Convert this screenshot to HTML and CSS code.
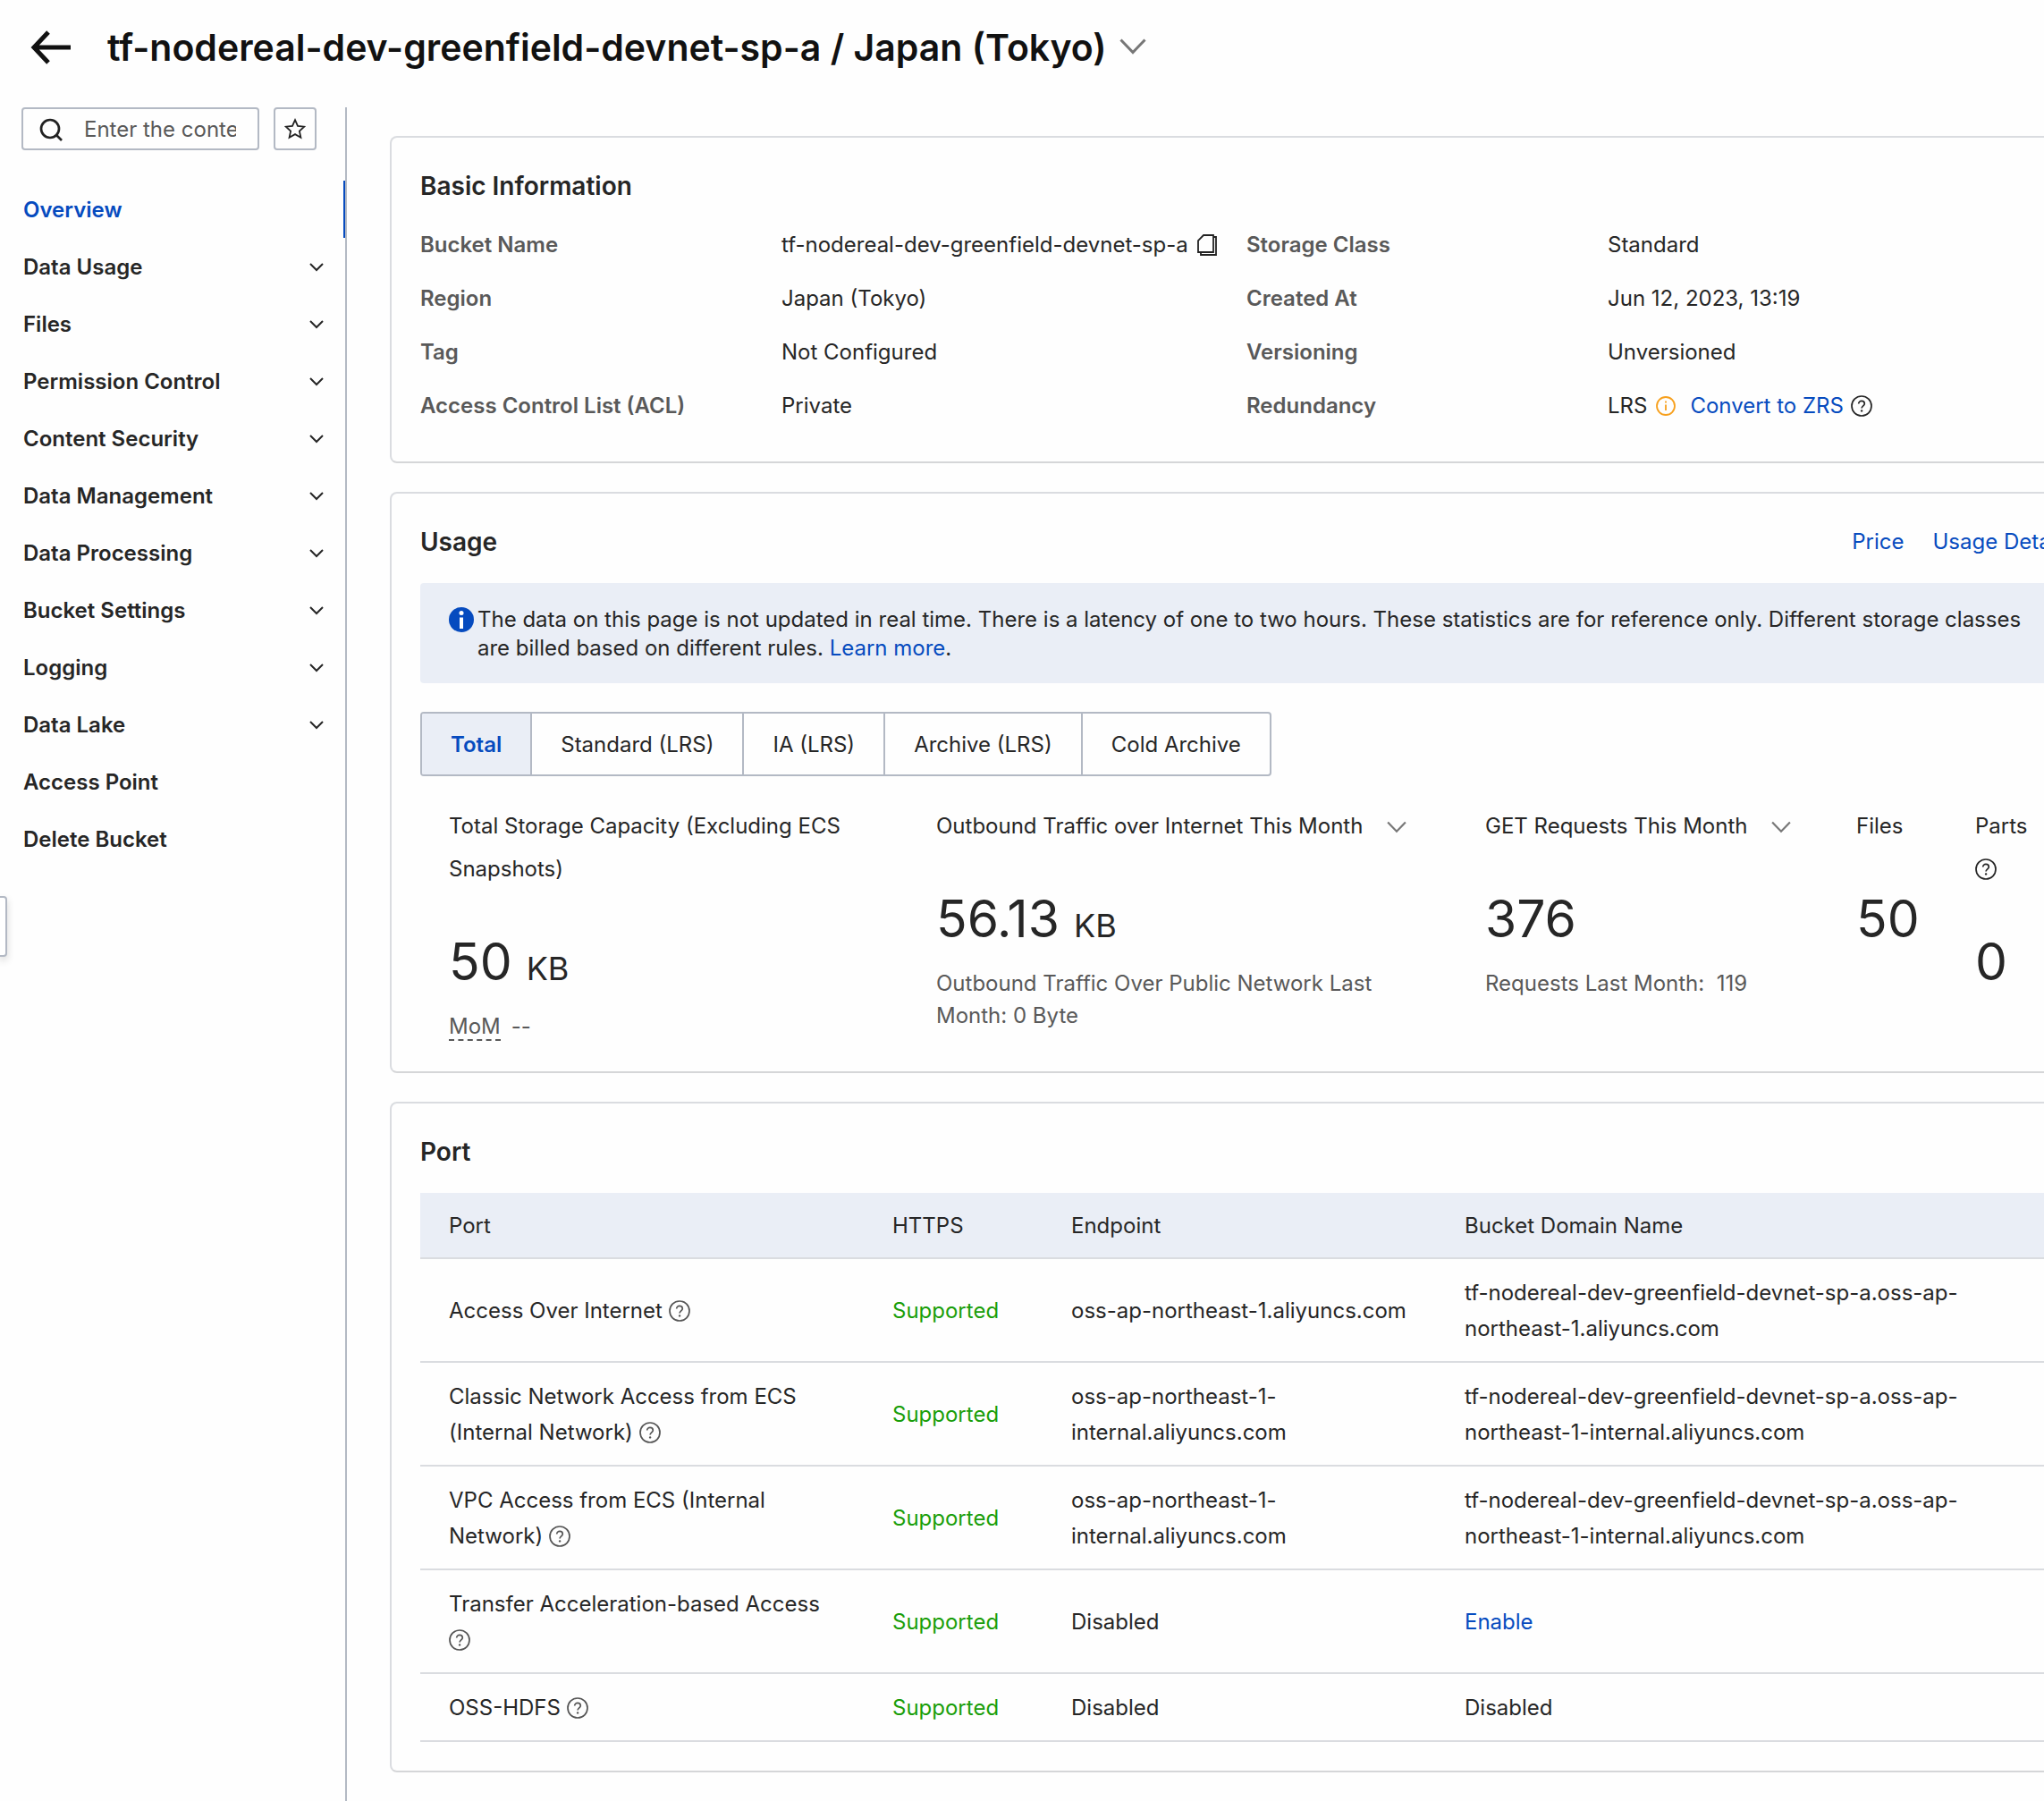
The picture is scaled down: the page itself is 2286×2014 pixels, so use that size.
FILE: index.html
```html
<!DOCTYPE html>
<html lang="en">
<head>
<meta charset="utf-8">
<title>tf-nodereal-dev-greenfield-devnet-sp-a</title>
<link rel="stylesheet" href="styles.css">
</head>
<body>
<svg class="defs" aria-hidden="true">
  <symbol id="help" viewBox="0 0 24 24"><circle cx="12" cy="12" r="11" fill="none" stroke="currentColor" stroke-width="1.7"/><path d="M8.7 9.6C8.7 7.6 10.1 6.4 12 6.4s3.3 1.2 3.3 3c0 2.3-3.2 2.6-3.2 5.1" fill="none" stroke="currentColor" stroke-width="1.7"/><circle cx="12.1" cy="17.4" r="1.2" fill="currentColor"/></symbol>
  <symbol id="chev" viewBox="0 0 16 10"><path d="M1 1l7 7 7-7" fill="none" stroke="currentColor" stroke-width="2"/></symbol>
  <symbol id="chev-wide" viewBox="0 0 30 18"><path d="M1.5 1.5L15 15.5 28.5 1.5" fill="none" stroke="currentColor" stroke-width="3"/></symbol>
</svg>
<div class="page">
  <header class="header">
    <button class="plain" aria-label="Back"><svg width="46" height="38" viewBox="0 0 46 38" fill="none" stroke="#111" stroke-width="5"><path d="M20 2L4 19l16 17M4 19h41"/></svg></button>
    <h1 class="title">tf-nodereal-dev-greenfield-devnet-sp-a / Japan (Tokyo)</h1>
    <button class="plain title-toggle" aria-label="Switch bucket"><svg width="30" height="18"><use href="#chev-wide"/></svg></button>
  </header>
  <div class="body">
    <aside class="sidebar">
      <div class="tools">
        <label class="search">
          <svg width="26" height="26" viewBox="0 0 26 26" fill="none" stroke="#222" stroke-width="2.7"><circle cx="12" cy="12" r="10"/><path d="M19 19l6 6"/></svg>
          <input type="text" placeholder="Enter the content" aria-label="Search menu">
        </label>
        <button class="star" aria-label="Favorites"><svg width="24" height="24" viewBox="0 0 24 24" fill="none" stroke="#222" stroke-width="1.8"><path d="M12 2.2l3 6.7 7.3.8-5.4 4.9 1.5 7.2-6.4-3.7-6.4 3.7 1.5-7.2L1.7 9.7l7.300-.8z"/></svg></button>
      </div>
      <nav class="menu">
        <a class="item active" href="#">Overview</a>
        <a class="item" href="#">Data Usage<svg width="16" height="10"><use href="#chev"/></svg></a>
        <a class="item" href="#">Files<svg width="16" height="10"><use href="#chev"/></svg></a>
        <a class="item" href="#">Permission Control<svg width="16" height="10"><use href="#chev"/></svg></a>
        <a class="item" href="#">Content Security<svg width="16" height="10"><use href="#chev"/></svg></a>
        <a class="item" href="#">Data Management<svg width="16" height="10"><use href="#chev"/></svg></a>
        <a class="item" href="#">Data Processing<svg width="16" height="10"><use href="#chev"/></svg></a>
        <a class="item" href="#">Bucket Settings<svg width="16" height="10"><use href="#chev"/></svg></a>
        <a class="item" href="#">Logging<svg width="16" height="10"><use href="#chev"/></svg></a>
        <a class="item" href="#">Data Lake<svg width="16" height="10"><use href="#chev"/></svg></a>
        <a class="item" href="#">Access Point</a>
        <a class="item" href="#">Delete Bucket</a>
      </nav>
    </aside>
    <main class="main">
      <section class="card">
        <div class="card-head"><h2>Basic Information</h2></div>
        <dl class="info">
          <dt>Bucket Name</dt>
          <dd>tf-nodereal-dev-greenfield-devnet-sp-a<button class="plain copy" aria-label="Copy"><svg width="22" height="24" viewBox="0 0 22 24" fill="none" stroke="#222" stroke-width="1.8"><path d="M7 1h11v19H1V7z"/><path d="M18 3h3v20H4v-3"/></svg></button></dd>
          <dt>Storage Class</dt><dd>Standard</dd>
          <dt>Region</dt><dd>Japan (Tokyo)</dd>
          <dt>Created At</dt><dd>Jun 12, 2023, 13:19</dd>
          <dt>Tag</dt><dd>Not Configured</dd>
          <dt>Versioning</dt><dd>Unversioned</dd>
          <dt>Access Control List (ACL)</dt><dd>Private</dd>
          <dt>Redundancy</dt>
          <dd>LRS<svg class="warn" width="22" height="22" viewBox="0 0 22 22" fill="none" stroke="#f7a01d" stroke-width="1.8"><circle cx="11" cy="11" r="10"/><path d="M11 9.5V16M11 5.5v2"/></svg><a href="#">Convert to ZRS</a><svg class="help" width="24" height="24"><use href="#help"/></svg></dd>
        </dl>
      </section>

      <section class="card">
        <div class="card-head"><h2>Usage</h2><div class="links"><a href="#">Price</a><a href="#">Usage Details</a></div></div>
        <div class="alert">
          <svg width="28" height="28" viewBox="0 0 28 28"><circle cx="14" cy="14" r="14" fill="#064bbf"/><circle cx="14" cy="6.5" r="2.5" fill="#fff"/><path d="M14 11.5V24" stroke="#fff" stroke-width="4"/></svg>
          <p>The data on this page is not updated in real time. There is a latency of one to two hours. These statistics are for reference only. Different storage classes are billed based on different rules. <a href="#">Learn more</a>.</p>
        </div>
        <div class="tabs">
          <button class="tab on">Total</button><button class="tab">Standard (LRS)</button><button class="tab">IA (LRS)</button><button class="tab">Archive (LRS)</button><button class="tab">Cold Archive</button>
        </div>
        <div class="stats">
          <div class="stat"><div class="name">Total Storage Capacity (Excluding ECS Snapshots)</div><div class="num">50 <span class="unit">KB</span></div><div class="sub"><span class="mom">MoM</span>--</div></div>
          <div class="stat"><div class="name">Outbound Traffic over Internet This Month<svg class="more" width="22" height="14"><use href="#chev-wide"/></svg></div><div class="num">56.13 <span class="unit">KB</span></div><div class="sub">Outbound Traffic Over Public Network Last Month: 0 Byte</div></div>
          <div class="stat"><div class="name">GET Requests This Month<svg class="more" width="22" height="14"><use href="#chev-wide"/></svg></div><div class="num">376</div><div class="sub">Requests Last Month:&nbsp; 119</div></div>
          <div class="stat"><div class="name">Files</div><div class="num">50</div></div>
          <div class="stat"><div class="name">Parts <svg class="help" width="24" height="24"><use href="#help"/></svg></div><div class="num">0</div></div>
        </div>
      </section>

      <section class="card">
        <div class="card-head"><h2>Port</h2></div>
        <table class="ports">
          <colgroup><col class="c-port"><col class="c-https"><col class="c-end"><col></colgroup>
          <thead><tr><th>Port</th><th>HTTPS</th><th>Endpoint</th><th>Bucket Domain Name</th></tr></thead>
          <tbody>
            <tr><td>Access Over Internet <svg class="help" width="24" height="24"><use href="#help"/></svg></td><td class="ok">Supported</td><td>oss-ap-northeast-1.aliyuncs.com</td><td>tf-nodereal-dev-greenfield-devnet-sp-a.oss-ap-northeast-1.aliyuncs.com</td></tr>
            <tr><td>Classic Network Access from ECS (Internal Network) <svg class="help" width="24" height="24"><use href="#help"/></svg></td><td class="ok">Supported</td><td>oss-ap-northeast-1-internal.aliyuncs.com</td><td>tf-nodereal-dev-greenfield-devnet-sp-a.oss-ap-northeast-1-internal.aliyuncs.com</td></tr>
            <tr><td>VPC Access from ECS (Internal Network) <svg class="help" width="24" height="24"><use href="#help"/></svg></td><td class="ok">Supported</td><td>oss-ap-northeast-1-internal.aliyuncs.com</td><td>tf-nodereal-dev-greenfield-devnet-sp-a.oss-ap-northeast-1-internal.aliyuncs.com</td></tr>
            <tr><td>Transfer Acceleration-based Access <svg class="help" width="24" height="24"><use href="#help"/></svg></td><td class="ok">Supported</td><td>Disabled</td><td><a href="#">Enable</a></td></tr>
            <tr><td>OSS-HDFS <svg class="help" width="24" height="24"><use href="#help"/></svg></td><td class="ok">Supported</td><td>Disabled</td><td>Disabled</td></tr>
          </tbody>
        </table>
      </section>
    </main>
  </div>
  <button class="drawer" aria-label="Open navigation"></button>
</div>
</body>
</html>
```
FILE: styles.css
```css
* { box-sizing: border-box; }
body {
  margin: 0;
  background: #fefefe;
  color: #262626;
  font: 24px/32px Inter, "Liberation Sans", sans-serif;
}
h1, h2, p, dl, dd { margin: 0; }
a { color: #064bbf; text-decoration: none; }
button { font: inherit; color: inherit; cursor: pointer; }
svg { flex: none; }
.defs { display: none; }
.plain { display: flex; padding: 0; border: 0; background: none; }

.page {
  position: relative;
  display: flex;
  flex-direction: column;
  min-height: 100vh;
  overflow: hidden;
}
.header {
  display: flex;
  align-items: center;
  height: 106px;
  margin-bottom: 14px;
  padding-left: 34px;
}
.title { margin-left: 40px; font-size: 41px; line-height: 56px; font-weight: 600; color: #111; white-space: nowrap; }
.title-toggle { margin-left: 14px; padding-bottom: 2px; color: #777; }
.body { display: flex; flex: 1; }

.sidebar { flex: none; width: 388px; border-right: 2px solid #b3b9c4; }
.tools { display: flex; gap: 16px; padding-left: 24px; margin-bottom: 34px; }
.search {
  display: flex;
  align-items: center;
  gap: 24px;
  width: 266px;
  height: 48px;
  padding: 2px 24px 0 18px;
  border: 2px solid #b3b9c4;
  border-radius: 4px;
}
.search input {
  flex: 1;
  min-width: 0;
  padding: 0;
  border: 0;
  outline: 0;
  background: none;
  font: inherit;
}
.search input::placeholder { color: #595959; }
.star {
  display: flex;
  align-items: center;
  justify-content: center;
  width: 48px;
  height: 48px;
  padding: 0;
  border: 2px solid #b3b9c4;
  border-radius: 4px;
  background: none;
}
.item {
  display: flex;
  align-items: center;
  justify-content: space-between;
  height: 64px;
  padding: 2px 22px 0 26px;
  border-right: 2px solid transparent;
  color: #262626;
  font-weight: 600;
}
.item.active { color: #064bbf; border-right-color: #064bbf; }

/* The content column runs past the right edge of the window. */
.main {
  display: flex;
  flex-direction: column;
  gap: 32px;
  flex: 1;
  min-width: 0;
  margin-right: -66px;
  padding: 32px 0 32px 48px;
}
.card {
  padding: 32px;
  border: 2px solid #dadce0;
  border-bottom-color: #d5d6d8;
  border-radius: 8px;
}
.card-head { display: flex; justify-content: space-between; align-items: center; height: 44px; margin-bottom: 24px; }
.card-head h2 { font-size: 28px; line-height: 44px; font-weight: 600; }
.links { display: flex; gap: 32px; }

.info {
  display: grid;
  grid-template-columns: 404fr 520fr 404fr 520fr;
  row-gap: 28px;
  padding: 4px 0 14px;
}
.info dt { color: #595959; font-weight: 600; }
.info dd { display: flex; align-items: center; white-space: nowrap; }
.copy { margin-left: 10px; }
.warn { margin: 0 16px 0 10px; }
.info .help { margin-left: 8px; }

.alert { display: flex; gap: 4px; align-items: flex-start; padding: 25px 32px 23px; border-radius: 4px; background: #eaeef6; }
.alert svg { margin-top: 2px; }
.alert + .tabs { margin-top: 32px; }
.tabs { display: flex; width: fit-content; height: 72px; border: 2px solid #b3b9c4; border-radius: 4px; overflow: hidden; }
.tab { padding: 2px 32px 0; border: 0; background: none; }
.tab + .tab { border-left: 2px solid #b3b9c4; }
.tab.on { background: #eaeef6; color: #064bbf; font-weight: 600; }

.stats { display: grid; grid-template-columns: 545fr 614fr 415fr 133fr 141fr; margin-top: 32px; }
.stat { min-width: 0; padding: 0 32px; }
.name { line-height: 48px; }
.more { margin-left: 27px; color: #777; }
.num { margin-top: 48px; font-size: 57px; line-height: 64px; white-space: nowrap; }
.unit { font-size: 36px; line-height: 36px; }
.sub { margin-top: 22px; line-height: 36px; color: #595959; }
.mom { margin-right: 12px; border-bottom: 2px dashed #595959; }

.ports { width: 100%; table-layout: fixed; border-collapse: collapse; line-height: 40px; }
.c-port { width: 496px; }
.c-https { width: 200px; }
.c-end { width: 440px; }
.ports th, .ports td { padding: 18px 32px 16px; border-bottom: 2px solid #dadce0; text-align: left; vertical-align: middle; }
.ports th { padding: 17px 32px 15px; background: #eaeef6; font-weight: 400; }
.ports .ok { color: #1a9e0a; }
.ports .help { color: #555; }
.name .help, .ports .help { vertical-align: -4px; }

.drawer {
  position: absolute;
  left: 0;
  top: 1002px;
  width: 8px;
  height: 68px;
  padding: 0;
  border: 2px solid #b3b9c4;
  border-left: 0;
  border-radius: 0 4px 4px 0;
  background: #fff;
  box-shadow: 0 4px 8px rgba(0, 0, 0, .16);
}
```
